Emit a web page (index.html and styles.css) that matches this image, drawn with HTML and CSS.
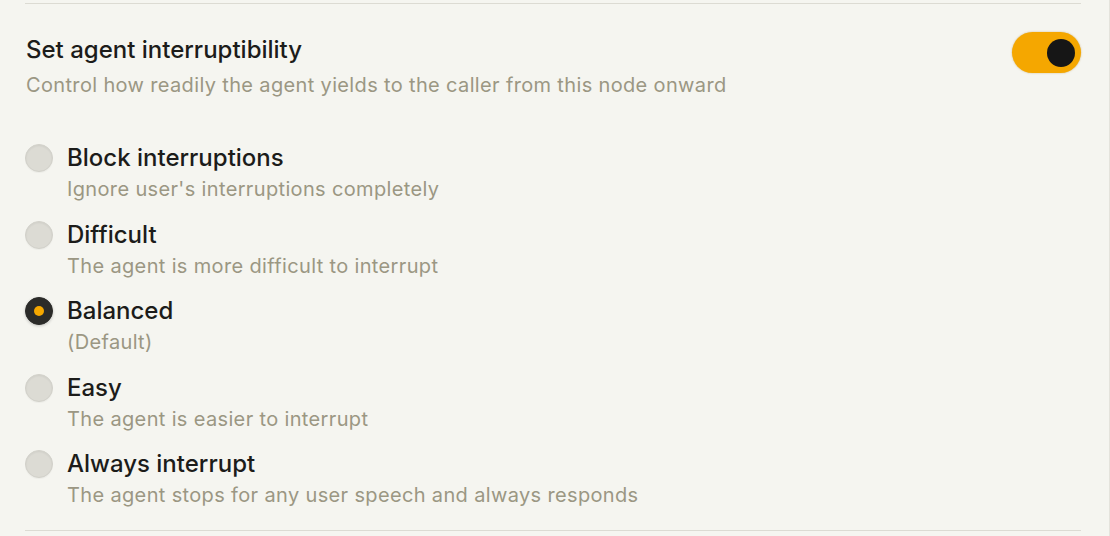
FILE: index.html
```html
<!DOCTYPE html>
<html lang="en">
<head>
  <meta charset="UTF-8">
  <meta name="viewport" content="width=device-width, initial-scale=1.0">
  <title>Agent interruptibility</title>
  <link rel="stylesheet" href="styles.css">
</head>
<body>
<div class="panel">
  <section class="setting">
    <div class="setting-head">
      <div class="setting-text">
        <h3 class="setting-title">Set agent interruptibility</h3>
        <p class="setting-desc">Control how readily the agent yields to the caller from this node onward</p>
      </div>
      <button class="toggle is-on" aria-pressed="true"><span class="toggle-knob"></span></button>
    </div>

    <div class="options">
      <label class="option">
        <span class="radio"></span>
        <span class="option-text">
          <span class="option-label">Block interruptions</span>
          <span class="option-desc">Ignore user's interruptions completely</span>
        </span>
      </label>
      <label class="option">
        <span class="radio"></span>
        <span class="option-text">
          <span class="option-label">Difficult</span>
          <span class="option-desc">The agent is more difficult to interrupt</span>
        </span>
      </label>
      <label class="option">
        <span class="radio is-checked"></span>
        <span class="option-text">
          <span class="option-label">Balanced</span>
          <span class="option-desc">(Default)</span>
        </span>
      </label>
      <label class="option">
        <span class="radio"></span>
        <span class="option-text">
          <span class="option-label">Easy</span>
          <span class="option-desc">The agent is easier to interrupt</span>
        </span>
      </label>
      <label class="option">
        <span class="radio"></span>
        <span class="option-text">
          <span class="option-label">Always interrupt</span>
          <span class="option-desc">The agent stops for any user speech and always responds</span>
        </span>
      </label>
    </div>
  </section>
</div>
</body>
</html>
```

FILE: styles.css
```css
html, body {
  height: 100%;
}
body {
  margin: 0;
  background: #f5f5f0;
  font-family: Inter, 'Noto Sans', Arial, sans-serif;
  color: #1c1c1a;
  overflow: hidden;
}
.panel {
  height: 100%;
  border-right: 1px solid #e4e3dc;
  box-sizing: border-box;
  padding: 3px 28px 0 25px;
}
.setting {
  border-top: 1px solid #dcdbd3;
  border-bottom: 1px solid #dcdbd3;
  padding: 31px 0 22px 0;
}
.setting-head {
  display: flex;
  justify-content: space-between;
  align-items: flex-start;
}
.setting-title {
  margin: 0;
  font-size: 24px;
  line-height: 30px;
  font-weight: 500;
  padding-left: 1px;
}
.setting-desc {
  margin: 7px 0 0 1px;
  font-size: 20px;
  line-height: 26px;
  letter-spacing: 0.35px;
  color: #9b9783;
}
.toggle {
  width: 69px;
  height: 41px;
  margin-top: -3px;
  border: none;
  border-radius: 21px;
  background: #f5a700;
  box-shadow: 0 0 2px rgba(160, 110, 0, 0.45);
  padding: 0 6px;
  display: flex;
  align-items: center;
  justify-content: flex-end;
  cursor: pointer;
}
.toggle-knob {
  width: 28px;
  height: 28px;
  border-radius: 50%;
  background: #161616;
}
.options {
  margin-top: 45px;
  display: flex;
  flex-direction: column;
  gap: 17.5px;
}
.option {
  display: flex;
  align-items: flex-start;
  gap: 14px;
  cursor: pointer;
}
.radio {
  width: 28px;
  height: 28px;
  margin-top: 1px;
  border-radius: 50%;
  box-sizing: border-box;
  background: #dcdbd4;
  border: 1px solid #d2d1ca;
  box-shadow: inset 0 1px 2px rgba(0, 0, 0, 0.06), 0 1px 1px rgba(0, 0, 0, 0.04);
  flex: none;
}
.radio.is-checked {
  background: #2b2b29;
  border-color: #2b2b29;
  box-shadow: 0 1px 3px rgba(0, 0, 0, 0.2);
  display: flex;
  align-items: center;
  justify-content: center;
}
.radio.is-checked::after {
  content: '';
  width: 10px;
  height: 10px;
  border-radius: 50%;
  background: #f5a700;
}
.option-text {
  display: flex;
  flex-direction: column;
}
.option-label {
  font-size: 24px;
  line-height: 30px;
  font-weight: 500;
}
.option-desc {
  margin-top: 3px;
  font-size: 20px;
  line-height: 26px;
  letter-spacing: 0.35px;
  color: #9b9783;
}
```
